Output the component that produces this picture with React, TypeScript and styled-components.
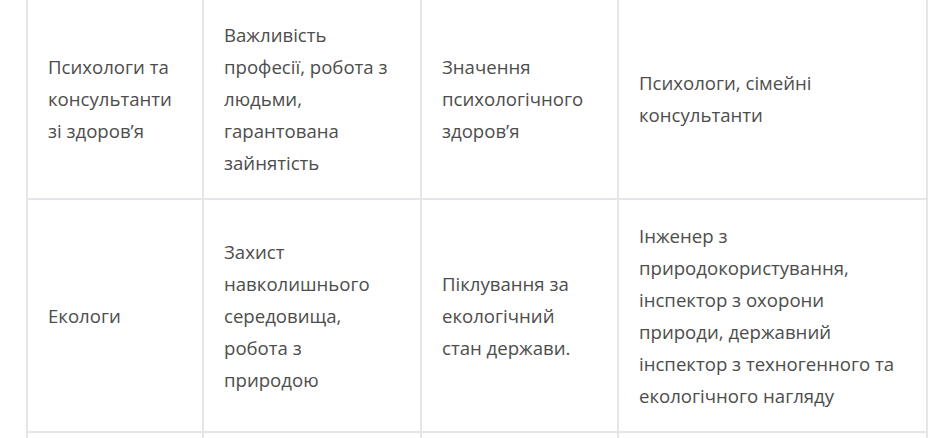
import styled, { createGlobalStyle } from "styled-components";

const GlobalStyle = createGlobalStyle`
  html, body {
    margin: 0;
    padding: 0;
    background: #ffffff;
  }
  body {
    font-family: "Open Sans", "Noto Sans", "DejaVu Sans", sans-serif;
    overflow: hidden;
  }
`;

const Page = styled.div`
  padding-left: 26px;
  margin-top: -3px;
`;

const Table = styled.table`
  border-collapse: collapse;
  table-layout: fixed;
  width: 900px;
  color: #4d4d4d;
  font-size: 18.6px;
  line-height: 32px;
`;

const Cell = styled.td`
  border: 2px solid #e6e6ea;
  padding: 20px 20px 19px 20px;
  vertical-align: middle;
  text-align: left;
`;

const rows = [
  [
    "Психологи та консультанти зі здоров’я",
    "Важливість професії, робота з людьми, гарантована зайнятість",
    "Значення психологічного здоров’я",
    "Психологи, сімейні консультанти",
  ],
  [
    "Екологи",
    "Захист навколишнього середовища, робота з природою",
    "Піклування за екологічний стан держави.",
    "Інженер з природокористування, інспектор з охорони природи, державний інспектор з техногенного та екологічного нагляду",
  ],
  ["", "", "", ""],
];

const widths = [176, 218, 197, 309];

export default function App() {
  return (
    <>
      <GlobalStyle />
      <Page>
        <Table>
          <colgroup>
            {widths.map((w, i) => (
              <col key={i} style={{ width: w }} />
            ))}
          </colgroup>
          <tbody>
            {rows.map((row, r) => (
              <tr key={r}>
                {row.map((text, c) => (
                  <Cell key={c}>{text || "\u00a0"}</Cell>
                ))}
              </tr>
            ))}
          </tbody>
        </Table>
      </Page>
    </>
  );
}
